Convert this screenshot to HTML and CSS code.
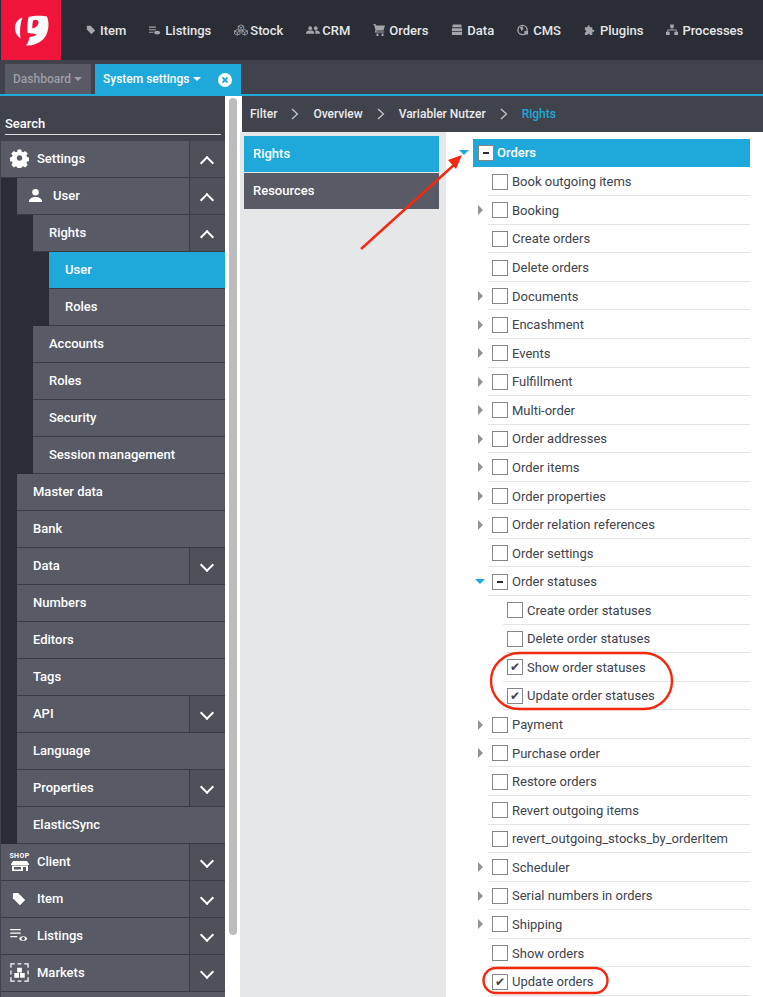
FILE: index.html
```html
<!DOCTYPE html>
<html lang="en">
<head>
<meta charset="utf-8">
<title>System settings</title>
<link rel="stylesheet" href="styles.css">
</head>
<body>
<div class="app">
  <header class="topbar">
    <div class="logo">
      <svg viewBox="0 0 60 60" width="60" height="60"><path fill="#fff" d="M21.500 17.500c-5 2-8 6-7.500 11.500.3 4 2.500 7.500 5.500 9.500-1-7.500-.5-15 2-21z"/><path fill="#fff" fill-rule="evenodd" d="M27.500 17c5.500-1.500 13.500-1.500 18.500-.5 3 7.500 1.500 17.500-4 23-5 4.500-11 6.500-17 6 2-2.500 3-5.500 3.500-8.500 2.500 0 5.500-1 7.500-2.500-3-.5-6-1.500-9.500-1.500-.5-6 0-11 1-16zM32 20.500c-.5 2.500-.7 5-.7 8 2.500-.5 5-2 6-4.500.6-2-.3-4-2-4.200-1.200-.2-2.300.2-3.300.7z"/></svg>
    </div>
    <nav class="mainnav">
      <a class="navitem"><svg class="navicon" viewBox="0 0 12 12"><path d="M1 1h4.500l5.500 5.500-4.500 4.500-5.500-5.500z"/></svg>Item</a>
      <a class="navitem"><svg class="navicon wide" viewBox="0 0 14 12"><path d="M0 2h8v1.300h-8zM0 5h8v1.300h-8zM0 8h5v1.300h-5zM6 9a3.500 2.200 0 0 1 7 0a3.500 2.200 0 0 1-7 0z"/></svg>Listings</a>
      <a class="navitem"><svg class="navicon wider" viewBox="0 0 15 12"><path fill="none" stroke="#a4a6ab" stroke-width=".9" d="M7.500.5l3 1.500v3l-3 1.500-3-1.500v-3zM4.500 2l3 1.500 3-1.500M7.500 3.500v3M3.500 5.500l3 1.500v3l-3 1.500-3-1.500v-3zM.5 7l3 1.500 3-1.500M3.500 8.500v3M11.500 5.500l3 1.500v3l-3 1.500-3-1.500v-3zM8.500 7l3 1.500 3-1.500M11.500 8.500v3"/></svg>Stock</a>
      <a class="navitem"><svg class="navicon wider" viewBox="0 0 15 12"><circle cx="4.500" cy="4" r="2"/><circle cx="10.500" cy="4" r="2"/><path d="M0 10c0-3 2-3.500 4.500-3.500s4.500.5 4.500 3.500zM9.500 6.500c3 0 5.500.5 5.500 3.500h-5c0-1.500 0-2.500-.5-3.500z"/></svg>CRM</a>
      <a class="navitem"><svg class="navicon wide" viewBox="0 0 12 12"><path d="M0 0h2.500l.5 1.500h9l-1.500 5h-7l-.2 1h8v1h-9.500l.7-2.500-1.500-5.500h-1zM3.500 9.500h2v2.500h-2zM8.500 9.500h2v2.500h-2z"/></svg>Orders</a>
      <a class="navitem"><svg class="navicon wide" viewBox="0 0 13 12"><path d="M2 0h9l.8 3h-10.600zM1 4h11v3h-11zM1 8h11v3.500h-11z"/></svg>Data</a>
      <a class="navitem"><svg class="navicon wide" viewBox="0 0 13 12"><circle cx="6" cy="6" r="5" fill="none" stroke="#a4a6ab" stroke-width="1.500"/><path d="M3 3l3-1 1 3-2 2zM8 7h4v4h-4z"/></svg>CMS</a>
      <a class="navitem"><svg class="navicon wide" viewBox="0 0 13 12"><path d="M1 3h3c-1-3 3-3 2 0h3v3c3-1 3 3 0 2v3.500h-3c1-2-3-2-2 0h-3v-3c2 1 2-3 0-2z"/></svg>Plugins</a>
      <a class="navitem"><svg class="navicon wide" viewBox="0 0 13 12"><path d="M4.500 0h4v3.500h-1.500v2h4.500v2.500h1.500v3.500h-4v-3.500h1.500v-1.500h-8v1.500h1.500v3.500h-4v-3.500h1.500v-2.500h4.500v-2h-1.500z"/></svg>Processes</a>
    </nav>
  </header>

  <div class="tabbar">
    <div class="tab">Dashboard<span class="caret"></span></div>
    <div class="tab active">System settings<span class="caret"></span>
      <svg class="tabclose" viewBox="0 0 14 14"><circle cx="7" cy="7" r="7" fill="#fff"/><path d="M4.500 4.500l5 5M9.500 4.500l-5 5" stroke="#1fa9db" stroke-width="1.800" fill="none"/></svg>
    </div>
  </div>

  <div class="workspace">
    <aside class="sidebar">
      <div class="search"><span class="searchlabel">Search</span></div>

      <div class="row"><span class="rowicon"><svg viewBox="0 0 20 20" width="19" height="19"><path fill="#fff" fill-rule="evenodd" d="M8 1h4l.5 2.500 1.600.7 2.200-1.400 2.800 2.800-1.400 2.200.7 1.700 2.600.5v4l-2.600.5-.7 1.600 1.400 2.200-2.800 2.800-2.200-1.400-1.600.7-.5 2.500h-4l-.5-2.500-1.600-.7-2.200 1.400-2.800-2.800 1.400-2.200-.7-1.600-2.600-.5v-4l2.600-.5.7-1.700-1.400-2.200 2.800-2.800 2.200 1.400 1.600-.7zM10 7.500a3 3 0 1 0 0 6 3 3 0 0 0 0-6z" transform="translate(.5 -.5) scale(.95)"/></svg></span><span class="label">Settings</span><span class="toggle up"></span></div>

      <div class="nest n1">
        <div class="row"><span class="rowicon useric"><svg viewBox="0 0 16 16" width="15" height="15"><circle cx="8" cy="4.500" r="3.500" fill="#fff"/><path fill="#fff" d="M1 15c0-4 3-5.500 7-5.500s7 1.500 7 5.500z"/></svg></span><span class="label">User</span><span class="toggle up"></span></div>
        <div class="nest n2">
          <div class="row"><span class="label">Rights</span><span class="toggle up"></span></div>
          <div class="nest n3">
            <div class="row selected"><span class="label">User</span></div>
            <div class="row"><span class="label">Roles</span></div>
          </div>
          <div class="row"><span class="label">Accounts</span></div>
          <div class="row"><span class="label">Roles</span></div>
          <div class="row"><span class="label">Security</span></div>
          <div class="row"><span class="label">Session management</span></div>
        </div>
        <div class="row"><span class="label">Master data</span></div>
        <div class="row"><span class="label">Bank</span></div>
        <div class="row"><span class="label">Data</span><span class="toggle"></span></div>
        <div class="row"><span class="label">Numbers</span></div>
        <div class="row"><span class="label">Editors</span></div>
        <div class="row"><span class="label">Tags</span></div>
        <div class="row"><span class="label">API</span><span class="toggle"></span></div>
        <div class="row"><span class="label">Language</span></div>
        <div class="row"><span class="label">Properties</span><span class="toggle"></span></div>
        <div class="row"><span class="label">ElasticSync</span></div>
      </div>

      <div class="row"><span class="rowicon"><span class="shopicon"><span class="shop">SHOP</span><svg viewBox="0 0 18 10" width="18" height="10"><path fill="#fff" fill-rule="evenodd" d="M2 0h14l2 3v1h-18v-1zM1 4.500h16v5.500h-16zM3 6v2.500h7v-2.500zM12 6v4h3v-4z"/></svg></span></span><span class="label">Client</span><span class="toggle"></span></div>
      <div class="row"><span class="rowicon tagic"><svg viewBox="0 0 16 16" width="14" height="14"><path fill="#fff" d="M2 1h5l8 8-6 6-8-8v-5z"/></svg></span><span class="label">Item</span><span class="toggle"></span></div>
      <div class="row"><span class="rowicon"><svg viewBox="0 0 20 16" width="18" height="14"><path fill="#fff" fill-rule="evenodd" d="M0 0h12v1.500h-12zM0 4h12v1.500h-12zM0 8h8v1.500h-8zM10 11a5 3.800 0 0 1 9.500 0a5 3.800 0 0 1-9.500 0zM14.700 9a2 2 0 1 0 .1 4 2 2 0 0 0-.1-4z"/></svg></span><span class="label">Listings</span><span class="toggle"></span></div>
      <div class="row"><span class="rowicon"><svg viewBox="0 0 20 20" width="19" height="19"><path fill="none" stroke="#fff" stroke-width="1.300" d="M1 5v-4h4M8 1h4M15 1h4v4M19 8v4M19 15v4h-4M12 19h-4M5 19h-4v-4M1 12v-4"/><path fill="#fff" d="M7.500 5h5v5h-5zM4.500 10.500h5v5h-5zM10.500 10.500h5v5h-5z"/></svg></span><span class="label">Markets</span><span class="toggle"></span></div>
      <div class="row"></div>
    </aside>

    <div class="scrolltrack"><div class="scrollthumb"></div></div>

    <main class="content">
      <div class="crumbs">
        <span>Filter</span><svg class="chev" viewBox="0 0 8 12"><path d="M1 1l5.500 5-5.500 5" fill="none" stroke="#c9cacd" stroke-width="1.200"/></svg>
        <span>Overview</span><svg class="chev" viewBox="0 0 8 12"><path d="M1 1l5.500 5-5.500 5" fill="none" stroke="#c9cacd" stroke-width="1.200"/></svg>
        <span>Variabler Nutzer</span><svg class="chev" viewBox="0 0 8 12"><path d="M1 1l5.500 5-5.500 5" fill="none" stroke="#c9cacd" stroke-width="1.200"/></svg>
        <span class="current">Rights</span>
      </div>
      <div class="panes">
        <div class="leftpane">
          <div class="paneitem active">Rights</div>
          <div class="paneitem">Resources</div>
        </div>
        <div class="treepane">
          <div class="tree">
            <div class="node root"><span class="arrow down"></span><span class="rootbar"><span class="box minus"></span><span class="rootname">Orders</span></span></div>
            <div class="node"><span class="arrow none"></span><span class="box"></span><span class="name">Book outgoing items</span></div>
            <div class="node"><span class="arrow"></span><span class="box"></span><span class="name">Booking</span></div>
            <div class="node"><span class="arrow none"></span><span class="box"></span><span class="name">Create orders</span></div>
            <div class="node"><span class="arrow none"></span><span class="box"></span><span class="name">Delete orders</span></div>
            <div class="node"><span class="arrow"></span><span class="box"></span><span class="name">Documents</span></div>
            <div class="node"><span class="arrow"></span><span class="box"></span><span class="name">Encashment</span></div>
            <div class="node"><span class="arrow"></span><span class="box"></span><span class="name">Events</span></div>
            <div class="node"><span class="arrow"></span><span class="box"></span><span class="name">Fulfillment</span></div>
            <div class="node"><span class="arrow"></span><span class="box"></span><span class="name">Multi-order</span></div>
            <div class="node"><span class="arrow"></span><span class="box"></span><span class="name">Order addresses</span></div>
            <div class="node"><span class="arrow"></span><span class="box"></span><span class="name">Order items</span></div>
            <div class="node"><span class="arrow"></span><span class="box"></span><span class="name">Order properties</span></div>
            <div class="node"><span class="arrow"></span><span class="box"></span><span class="name">Order relation references</span></div>
            <div class="node"><span class="arrow none"></span><span class="box"></span><span class="name">Order settings</span></div>
            <div class="node"><span class="arrow down"></span><span class="box minus"></span><span class="name">Order statuses</span></div>
            <div class="node sub"><span class="box"></span><span class="name">Create order statuses</span></div>
            <div class="node sub"><span class="box"></span><span class="name">Delete order statuses</span></div>
            <div class="node sub"><span class="box checked"></span><span class="name">Show order statuses</span></div>
            <div class="node sub"><span class="box checked"></span><span class="name">Update order statuses</span></div>
            <div class="node"><span class="arrow"></span><span class="box"></span><span class="name">Payment</span></div>
            <div class="node"><span class="arrow"></span><span class="box"></span><span class="name">Purchase order</span></div>
            <div class="node"><span class="arrow none"></span><span class="box"></span><span class="name">Restore orders</span></div>
            <div class="node"><span class="arrow none"></span><span class="box"></span><span class="name">Revert outgoing items</span></div>
            <div class="node"><span class="arrow none"></span><span class="box"></span><span class="name">revert_outgoing_stocks_by_orderItem</span></div>
            <div class="node"><span class="arrow"></span><span class="box"></span><span class="name">Scheduler</span></div>
            <div class="node"><span class="arrow"></span><span class="box"></span><span class="name">Serial numbers in orders</span></div>
            <div class="node"><span class="arrow"></span><span class="box"></span><span class="name">Shipping</span></div>
            <div class="node"><span class="arrow none"></span><span class="box"></span><span class="name">Show orders</span></div>
            <div class="node"><span class="arrow none"></span><span class="box checked"></span><span class="name">Update orders</span></div>
          </div>
        </div>
      </div>
    </main>
  </div>

  <svg class="annotations" viewBox="0 0 763 997" width="763" height="997">
    <path d="M361 249L455 164" stroke="#f4280f" stroke-width="2.400" fill="none"/>
    <path d="M462 155l-14 5 8 9z" fill="#f4280f"/>
    <rect x="491" y="653" width="181" height="56" rx="28" fill="none" stroke="#f4280f" stroke-width="2.400"/>
    <rect x="483.500" y="968" width="124" height="25" rx="12.500" fill="none" stroke="#f4280f" stroke-width="2.400"/>
  </svg>
</div>
</body>
</html>
```
FILE: styles.css
```css
* { box-sizing: border-box; }
html, body { margin: 0; padding: 0; height: 100%; }
body { font-family: Roboto, "Liberation Sans", sans-serif; background: #fff; overflow: hidden; }
.app { position: relative; width: 763px; height: 997px; overflow: hidden; background: #40434c; }

.topbar { height: 60px; background: #2a2d35; display: flex; padding-left: 1px; }
.logo { width: 60px; height: 60px; background: #f0133a; flex: none; }
.mainnav { display: flex; align-items: center; padding-left: 25px; gap: 23px; height: 60px; }
.navitem { display: flex; align-items: center; color: #e6e6e8; font-size: 13px; font-weight: 500; white-space: nowrap; }
.navicon { width: 10px; height: 10px; fill: #a4a6ab; margin-right: 4px; flex: none; }
.navicon.wide { width: 12px; height: 12px; }
.navicon.wider { width: 14px; height: 12px; margin-right: 2px; }

.tabbar { height: 36px; background: #40434c; border-bottom: 2px solid #1fa9db; display: flex; padding: 4px 0 0 5px; gap: 4px; }
.tab { height: 30px; width: 86px; background: #585a65; color: #9d9ea5; font-size: 12px; font-weight: 500; display: flex; align-items: center; padding: 0 0 0 8px; }
.tab.active { width: 146px; background: #1fa9db; color: #fff; position: relative; }
.caret { width: 0; height: 0; border: 4px solid transparent; border-top-color: currentColor; border-bottom: 0; margin-left: 3px; }
.tabclose { width: 14px; height: 14px; position: absolute; left: 123px; top: 9px; }

.workspace { display: flex; height: 901px; padding-left: 1px; }

.sidebar { width: 224px; flex: none; background: #40434c; overflow: hidden; }
.search { height: 45px; padding: 16px 4px 0 4px; }
.searchlabel { display: block; height: 23px; border-bottom: 1px solid #d8d8da; color: #fff; font-size: 13px; font-weight: 500; line-height: 24px; }
.row { height: 37px; background: #585a65; border-bottom: 1px solid #3a3c44; display: flex; align-items: center; color: #fff; font-size: 13px; font-weight: 500; position: relative; padding-bottom: 1px; }
.label { padding-left: 16px; }
.rowicon { width: 36px; padding-left: 9px; flex: none; display: flex; align-items: center; position: relative; }
.rowicon.useric { padding-left: 11px; }
.rowicon.tagic { padding-left: 11px; }
.rowicon + .label { padding-left: 0; }
.toggle { position: absolute; right: 0; top: 0; width: 36px; height: 36px; background: #4e505a; border-left: 1px solid #3a3c44; }
.toggle::after { content: ""; position: absolute; left: 12px; top: 12px; width: 8px; height: 8px; border-right: 2px solid #fff; border-bottom: 2px solid #fff; transform: rotate(45deg); }
.toggle.up::after { top: 17px; transform: rotate(225deg); }
.nest { background: #2a2d35; padding-left: 16px; }
.row.selected { background: #1fa9db; }
.shopicon { display: flex; flex-direction: column; align-items: center; width: 19px; gap: 1px; }
.shop { font-size: 7px; line-height: 7px; font-weight: 700; letter-spacing: .4px; color: #fff; }

.scrolltrack { width: 15px; flex: none; background: #fff; padding: 2px 3px 0 4px; }
.scrollthumb { width: 8px; height: 837px; background: #bcbcbc; border-radius: 4px; }

.content { flex: 1; min-width: 0; display: flex; flex-direction: column; background: #fff; }
.crumbs { height: 36px; margin-left: 2px; background: #40434c; color: #eaeaec; font-size: 12px; font-weight: 500; display: flex; align-items: center; padding: 0 0 1px 8px; gap: 14px; }
.chev { width: 8px; height: 12px; }
.current { color: #1fa9db; }
.panes { flex: 1; display: flex; min-height: 0; }
.leftpane { width: 206px; background: #e6e7e9; flex: none; padding: 4px 7px 0 4px; }
.paneitem { height: 36px; margin-bottom: 1px; background: #585a65; color: #fff; font-size: 13px; font-weight: 500; display: flex; align-items: center; padding: 0 0 2px 9px; }
.paneitem.active { background: #1fa9db; }
.treepane { flex: 1; background: #fff; padding: 7px 13px 0 10px; overflow: hidden; }
.node { height: 28.570px; display: flex; align-items: center; font-size: 13px; color: #40434c; position: relative; padding-left: 17px; }
.node::after { content: ""; position: absolute; left: 32px; right: 0; bottom: 0; height: 1px; background: #e4e4e4; }
.node.sub { padding-left: 47px; }
.node.sub::after { left: 47px; }
.node.root { padding-left: 0; }
.node.root::after { display: none; }
.rootbar { flex: 1; height: 28px; background: #1fa9db; color: #fff; font-weight: 500; font-size: 13px; display: flex; align-items: center; padding: 0 0 1px 5px; }
.rootname { margin-left: 3px; }
.arrow { width: 15px; height: 16px; flex: none; position: relative; }
.root .arrow { width: 17px; }
.arrow::after { content: ""; position: absolute; left: 5px; top: 3px; border: 5px solid transparent; border-left-color: #909296; border-right: 0; }
.arrow.none::after { display: none; }
.arrow.down::after { left: 2px; top: 5px; border: 5px solid transparent; border-top-color: #1fa9db; border-bottom: 0; }
.root .arrow.down::after { left: 3px; }
.box { width: 16px; height: 16px; flex: none; border: 1px solid #85878b; background: #fff; margin-left: 4px; position: relative; display: block; }
.rootbar .box { margin-left: 0; }
.name { margin-left: 4px; white-space: nowrap; }
.box.minus::after { content: ""; position: absolute; left: 4px; top: 6px; width: 6px; height: 2px; background: #2a2d35; }
.box.checked::after { content: "\2714"; position: absolute; left: 0; top: 0; width: 14px; height: 14px; font: 12px/14px "DejaVu Sans", sans-serif; text-align: center; color: #40434c; }

.annotations { position: absolute; left: 0; top: 0; pointer-events: none; }
```
